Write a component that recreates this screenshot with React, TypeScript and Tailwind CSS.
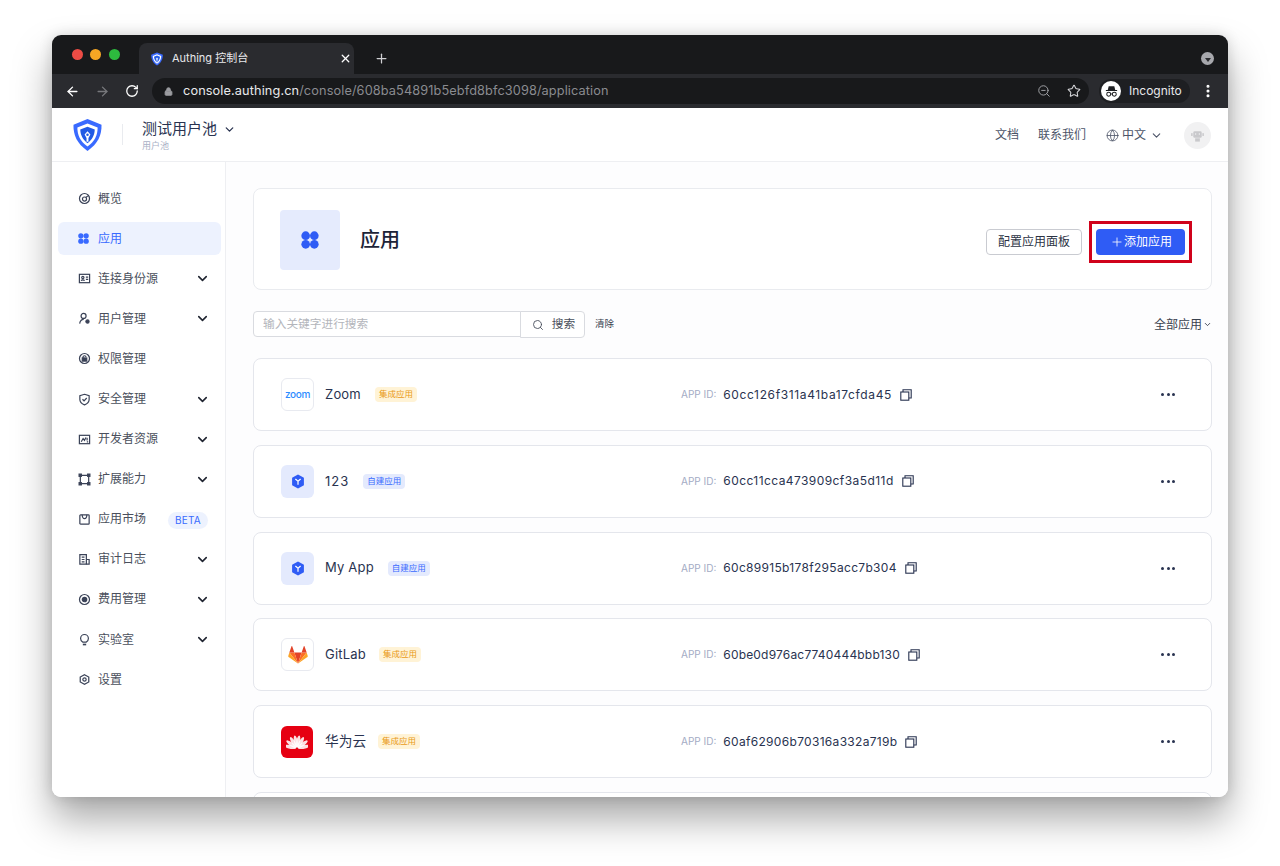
import { ArrowLeft, ArrowRight, ChevronDown, Globe, Lock, MoreVertical, Plus, RotateCw, Search, Star, X, ZoomOut } from "lucide-react";
import type { ReactNode } from "react";

const FONT = "font-['Inter','Noto_Sans_CJK_SC',sans-serif]";

function ShieldLogo(props: { className?: string }) {
  return (
    <svg viewBox="0 0 30 34" className={props.className}>
      <path d="M15 0.5 L29.5 6.5 C29.8 17 26 26 15 33.5 C4 26 0.2 17 0.5 6.5 Z" fill="#396aff" />
      <path d="M15 5 L25.5 9.2 C25.5 17 22.5 23.5 15 29 C7.5 23.5 4.5 17 4.5 9.2 Z" fill="#fff" />
      <path d="M15 8.5 L22.5 11.3 C22.3 17 20 21.5 15 25.5 C10 21.5 7.7 17 7.5 11.3 Z" fill="#215ae5" />
      <path d="M15 13 L18 16.5 L16 20 L16 24 L14 24 L14 20 L12 16.5 Z" fill="#fff" />
      <circle cx="15" cy="16.8" r="1.3" fill="#215ae5" />
    </svg>
  );
}

function Dots(props: { className?: string }) {
  return (
    <svg viewBox="0 0 20 20" className={props.className} fill="currentColor">
      <circle cx="5.2" cy="5.2" r="4.8" />
      <circle cx="14.8" cy="5.2" r="4.8" />
      <circle cx="5.2" cy="14.8" r="4.8" />
      <circle cx="14.8" cy="14.8" r="4.8" />
    </svg>
  );
}

// sidebar glyphs, all on a 14 box
const glyphs: Record<string, ReactNode> = {
  gauge: (
    <>
      <circle cx="7" cy="7" r="5.4" />
      <circle cx="7" cy="7.6" r="2.2" />
      <path d="M8.5 6 L10.5 4.2" />
    </>
  ),
  id: (
    <>
      <rect x="1.5" y="2.5" width="11" height="9" />
      <circle cx="5.2" cy="6" r="1.2" />
      <path d="M3.5 9.5 C4 8 6.4 8 7 9.5 M8.5 5.5 H11 M8.5 8 H11" />
    </>
  ),
  user: (
    <>
      <circle cx="6" cy="4.2" r="2.7" />
      <path d="M1.8 12.5 C2.2 9.5 4 8 6.2 8" />
      <circle cx="10.2" cy="10.2" r="1.7" fill="currentColor" />
    </>
  ),
  lock: (
    <>
      <circle cx="7" cy="7" r="5.4" />
      <rect x="4.6" y="6.4" width="4.8" height="3.4" fill="currentColor" />
      <path d="M5.4 6.4 V5.4 C5.4 3.6 8.6 3.6 8.6 5.4" />
    </>
  ),
  shield: (
    <>
      <path d="M7 1.4 L12 3 V7 C12 9.8 10 11.6 7 12.8 C4 11.6 2 9.8 2 7 V3 Z" />
      <path d="M4.8 6.8 L6.5 8.4 L9.4 5.4" />
    </>
  ),
  dev: (
    <>
      <rect x="1.5" y="2.5" width="11" height="9" />
      <path d="M3.5 9.5 L5.5 6 L7 8 L8.5 4.8 M9.5 9.5 H11 M9.8 5 V8" />
    </>
  ),
  ext: (
    <>
      <path d="M3.2 2.5 H10.8 M3.2 11.5 H10.8 M2.5 3.2 V10.8 M11.5 3.2 V10.8" />
      <rect x="1.2" y="1.2" width="2.4" height="2.4" fill="currentColor" />
      <rect x="10.4" y="1.2" width="2.4" height="2.4" fill="currentColor" />
      <rect x="1.2" y="10.4" width="2.4" height="2.4" fill="currentColor" />
      <rect x="10.4" y="10.4" width="2.4" height="2.4" fill="currentColor" />
    </>
  ),
  market: (
    <>
      <rect x="2" y="2" width="10" height="10" rx="0.8" />
      <path d="M4.5 2 C4.5 7.5 9.5 7.5 9.5 2" />
    </>
  ),
  log: (
    <>
      <path d="M9 12 H2 V1.8 H9 Z" />
      <path d="M4 4.5 H7 M4 7 H7 M4 9.5 H7 M9 7 H12 V12 H9" />
    </>
  ),
  fee: (
    <>
      <circle cx="7" cy="7" r="5.4" />
      <circle cx="7" cy="7" r="2.4" fill="currentColor" />
    </>
  ),
  bulb: (
    <>
      <path d="M5 9.8 C3.6 8.8 2.8 7.6 2.8 6 C2.8 3.5 4.8 1.6 7 1.6 C9.2 1.6 11.2 3.5 11.2 6 C11.2 7.6 10.4 8.8 9 9.8 Z" />
      <path d="M5.2 12.4 H8.8" strokeWidth="1.8" />
    </>
  ),
  gear: (
    <>
      <path d="M7 1.8 L11.6 4.4 V9.6 L7 12.2 L2.4 9.6 V4.4 Z" />
      <circle cx="7" cy="7" r="1.8" />
    </>
  ),
};

function Glyph(props: { name: string }) {
  return (
    <svg viewBox="0 0 14 14" fill="none" stroke="currentColor" strokeWidth="1.3" className="h-[13px] w-[13px] text-[#3a4257]">
      {glyphs[props.name]}
    </svg>
  );
}

const navItems = [
  { label: "概览", icon: "gauge" },
  { label: "应用", active: true },
  { label: "连接身份源", icon: "id", more: true },
  { label: "用户管理", icon: "user", more: true },
  { label: "权限管理", icon: "lock" },
  { label: "安全管理", icon: "shield", more: true },
  { label: "开发者资源", icon: "dev", more: true },
  { label: "扩展能力", icon: "ext", more: true },
  { label: "应用市场", icon: "market", beta: true },
  { label: "审计日志", icon: "log", more: true },
  { label: "费用管理", icon: "fee", more: true },
  { label: "实验室", icon: "bulb", more: true },
  { label: "设置", icon: "gear" },
];

function Sidebar() {
  return (
    <aside className="w-[174px] shrink-0 border-r border-[#eeeff2] bg-white pl-[6px] pr-[4px] pt-[16px]">
      {navItems.map((item) => (
        <div key={item.label} className="flex h-[40.1px] items-center">
          <div className={"flex h-[33px] w-full items-center rounded-md pl-[20px] pr-[11px] pt-[1px] " + (item.active ? "bg-[#edf2fe] text-[#396aff]" : "text-[#4a4f5c]")}>
            <span className="flex w-[20px] shrink-0">
              {item.active ? <Dots className="h-[11px] w-[11px] text-[#396aff]" /> : <Glyph name={item.icon as string} />}
            </span>
            <span className="text-[12px] leading-none">{item.label}</span>
            {item.more && <ChevronDown className="ml-auto h-[15px] w-[15px] text-[#1f2430]" strokeWidth={2.5} />}
            {item.beta && (
              <span className="ml-auto mr-[2px] mt-[2px] rounded-full bg-[#edf2fe] px-[7px] py-[2px] text-[10px] leading-[13px] tracking-wide text-[#396aff]">BETA</span>
            )}
          </div>
        </div>
      ))}
    </aside>
  );
}

function Cube() {
  return (
    <div className="flex h-[33px] w-[33px] items-center justify-center rounded-md bg-[#e4eafd]">
      <svg viewBox="0 0 14 16" className="h-[15px] w-[14px]">
        <path d="M7 0.5 L13.3 4 V12 L7 15.5 L0.7 12 V4 Z" fill="#2f5cf5" />
        <path d="M4.2 5.4 L7 7.8 L9.8 5.4 M7 7.8 V11.4" fill="none" stroke="#fff" strokeWidth="1.3" />
      </svg>
    </div>
  );
}

function FramedIcon(props: { children: ReactNode }) {
  return (
    <div className="flex h-[33px] w-[33px] items-center justify-center rounded-md border-[1.5px] border-[#e8eaf0] bg-white">{props.children}</div>
  );
}

function GitlabIcon() {
  return (
    <svg viewBox="0 0 24 22" className="h-[18px] w-[20px]">
      <path d="M12 21.5 L16.4 8 H7.6 Z" fill="#e24329" />
      <path d="M12 21.5 L7.6 8 H1.4 Z" fill="#fc6d26" />
      <path d="M1.4 8 L0.1 12.2 C0 12.6 0.1 13 0.5 13.3 L12 21.5 Z" fill="#fca326" />
      <path d="M1.4 8 H7.6 L4.9 0.4 C4.8 0 4.2 0 4.1 0.4 Z" fill="#e24329" />
      <path d="M12 21.5 L16.4 8 H22.6 Z" fill="#fc6d26" />
      <path d="M22.6 8 L23.9 12.2 C24 12.6 23.9 13 23.5 13.3 L12 21.5 Z" fill="#fca326" />
      <path d="M22.6 8 H16.4 L19.1 0.4 C19.2 0 19.8 0 19.9 0.4 Z" fill="#e24329" />
    </svg>
  );
}

function HuaweiIcon() {
  const angles = [-78, -54, -31, -10, 10, 31, 54, 78];
  return (
    <div className="flex h-[32px] w-[32px] items-center justify-center rounded-md bg-[#e60012]">
      <svg viewBox="0 0 24 16" className="h-[15px] w-[22px]">
        {angles.map((a) => (
          <ellipse key={a} cx="12" cy="7.8" rx="2" ry="6.6" fill="#fff" opacity="0.88" transform={`rotate(${a} 12 15.5)`} />
        ))}
      </svg>
    </div>
  );
}

const apps: { name: string; tag: "int" | "own"; id: string; icon: ReactNode; tagGap: string; nameClass: string; idClass: string }[] = [
  {
    name: "Zoom",
    tag: "int",
    id: "60cc126f311a41ba17cfda45",
    icon: (
      <FramedIcon>
        <span className="font-['Inter',sans-serif] text-[10px] font-medium tracking-[-0.3px] text-[#2d8cff]">zoom</span>
      </FramedIcon>
    ),
    tagGap: "ml-[14px]",
    nameClass: "text-[13px] tracking-[0.2px]",
    idClass: "tracking-[0.63px]",
  },
  { name: "123", tag: "own", id: "60cc11cca473909cf3a5d11d", icon: <Cube />, tagGap: "ml-[14px]", nameClass: "text-[13px] tracking-[1px]", idClass: "tracking-[0.43px]" },
  { name: "My App", tag: "own", id: "60c89915b178f295acc7b304", icon: <Cube />, tagGap: "ml-[14px]", nameClass: "text-[13px] tracking-[0.2px]", idClass: "tracking-[0.31px]" },
  { name: "GitLab", tag: "int", id: "60be0d976ac7740444bbb130", icon: <FramedIcon><GitlabIcon /></FramedIcon>, tagGap: "ml-[13px]", nameClass: "text-[13px] tracking-[0.2px]", idClass: "tracking-[0.18px]" },
  { name: "华为云", tag: "int", id: "60af62906b70316a332a719b", icon: <HuaweiIcon />, tagGap: "ml-[12px]", nameClass: "text-[13.7px]", idClass: "tracking-[0.31px]" },
];

function AppRow(props: (typeof apps)[number]) {
  return (
    <div className="flex h-[73px] shrink-0 items-center rounded-lg border border-[#e4e6ec] bg-white pl-[27px] pr-[36px]">
      <div className="flex w-[401px] shrink-0 items-center">
        <div className="flex w-[44px] shrink-0">{props.icon}</div>
        <span className={"text-[#293350] " + props.nameClass}>{props.name}</span>
        <span
          className={
            "rounded px-[4px] text-[8.5px] leading-[15px] " +
            props.tagGap +
            " " +
            (props.tag === "int" ? "bg-[#fff3d6] text-[#e99a18]" : "bg-[#e4eafd] text-[#396aff]")
          }
        >
          {props.tag === "int" ? "集成应用" : "自建应用"}
        </span>
      </div>
      <span className="-ml-[1px] text-[10px] text-[#a3abc4]">APP ID:</span>
      <span className={"ml-[7px] text-[12px] text-[#293350] " + props.idClass}>{props.id}</span>
      <svg viewBox="0 0 12 12" fill="none" stroke="#293350" strokeWidth="1.1" className="ml-[8px] h-[12px] w-[12px]">
        <rect x="0.8" y="3" width="8" height="8.2" />
        <path d="M3 3 V0.8 H11.2 V9 H8.8" />
      </svg>
      <div className="ml-auto flex gap-[2.5px]">
        <span className="h-[3px] w-[3px] rounded-full bg-[#293350]" />
        <span className="h-[3px] w-[3px] rounded-full bg-[#293350]" />
        <span className="h-[3px] w-[3px] rounded-full bg-[#293350]" />
      </div>
    </div>
  );
}

function BrowserChrome() {
  return (
    <>
      <div className="flex h-[39px] bg-[#18191b] pl-[19.5px]">
        <div className="flex h-[39px] w-[67.5px] shrink-0 gap-[7.5px] pt-[14px]">
          <span className="h-[11px] w-[11px] rounded-full bg-[#ed4c45]" />
          <span className="h-[11px] w-[11px] rounded-full bg-[#f7a724]" />
          <span className="h-[11px] w-[11px] rounded-full bg-[#2dba3e]" />
        </div>
        <div className="mt-[8px] flex h-[31px] w-[215px] items-center rounded-t-lg bg-[#2a2b2f] pl-[12px] pr-[2px]">
          <ShieldLogo className="h-[14px] w-[12px]" />
          <span className="ml-[9px] text-[11px] text-[#e8e9ec]">Authing 控制台</span>
          <X className="ml-auto h-[13px] w-[13px] text-white" strokeWidth={2.4} />
        </div>
        <Plus className="ml-[20px] mt-[16px] h-[15px] w-[15px] text-[#cfd0d3]" strokeWidth={2} />
        <span className="ml-auto mr-[14px] mt-[17px] flex h-[13px] w-[13px] items-center justify-center rounded-full bg-[#a7a8ad]">
          <span className="mt-[2px] border-x-[3.5px] border-t-[4.5px] border-x-transparent border-t-[#2a2b2f]" />
        </span>
      </div>
      <div className="flex h-[34px] items-center bg-[#2a2b2f] pl-[13px]">
        <ArrowLeft className="h-[15px] w-[15px] text-white" strokeWidth={2.2} />
        <ArrowRight className="ml-[15px] h-[15px] w-[15px] text-[#77787c]" strokeWidth={2.2} />
        <RotateCw className="ml-[15px] h-[14px] w-[14px] text-white" strokeWidth={2.2} />
        <div className="ml-[13px] flex h-[26px] w-[937px] shrink-0 items-center rounded-full bg-[#18191b] pl-[12px] pr-[6px]">
          <Lock className="h-[9px] w-[9px] fill-[#9b9ca0] text-[#9b9ca0]" strokeWidth={2.5} />
          <span className="ml-[10px] text-[12.75px] tracking-[0.1px] text-[#e8e9ec]">console.authing.cn</span>
          <span className="text-[12.75px] tracking-[0.1px] text-[#8a8b90]">/console/608ba54891b5ebfd8bfc3098/application</span>
          <ZoomOut className="ml-auto h-[14px] w-[14px] text-[#a8a9ad]" strokeWidth={1.6} />
          <Star className="ml-[16px] mr-[2px] h-[14px] w-[14px] text-[#d5d6d9]" strokeWidth={1.8} />
        </div>
        <div className="ml-[10px] flex h-[24px] w-[91px] shrink-0 items-center rounded-full bg-[#1e1f22] pl-[2px]">
          <span className="flex h-[20px] w-[20px] items-center justify-center rounded-full bg-white">
            <svg viewBox="0 0 16 16" className="h-[15px] w-[15px]" fill="#1e1f22">
              <path d="M5 2.5 H11 L12 6.5 H14 V7.5 H2 V6.5 H4 Z" />
              <circle cx="5" cy="11" r="2.1" fill="none" stroke="#1e1f22" strokeWidth="1.1" />
              <circle cx="11" cy="11" r="2.1" fill="none" stroke="#1e1f22" strokeWidth="1.1" />
              <path d="M7 10.6 H9" stroke="#1e1f22" strokeWidth="1" />
            </svg>
          </span>
          <span className="ml-[8px] text-[12px] text-[#e8e9ec]">Incognito</span>
        </div>
        <MoreVertical className="ml-[10px] h-[16px] w-[16px] text-white" strokeWidth={2.6} />
      </div>
    </>
  );
}

function TopBar() {
  return (
    <header className="flex h-[54px] shrink-0 items-center border-b border-[#eeeff2] bg-white pl-[21px] pr-[17px]">
      <ShieldLogo className="h-[34px] w-[29px]" />
      <span className="ml-[20px] h-[21px] w-px bg-[#e9ebef]" />
      <div className="ml-[19px] mt-[2px] flex flex-col">
        <div className="flex items-center gap-[6px]">
          <span className="text-[15px] leading-[20px] text-[#293350]">测试用户池</span>
          <ChevronDown className="h-[13px] w-[13px] text-[#293350]" strokeWidth={2.4} />
        </div>
        <span className="mt-[1px] text-[9px] leading-[12px] text-[#a9b0c6]">用户池</span>
      </div>
      <div className="ml-auto mt-[1px] flex items-center text-[12px] text-[#4c5468]">
        <span>文档</span>
        <span className="ml-[19px]">联系我们</span>
        <Globe className="ml-[20px] h-[13px] w-[13px]" strokeWidth={1.5} />
        <span className="ml-[3px]">中文</span>
        <ChevronDown className="ml-[4px] h-[13px] w-[13px]" strokeWidth={2} />
        <span className="ml-[21px] flex h-[27px] w-[27px] items-center justify-center rounded-full bg-[#f1f1f2]">
          <svg viewBox="0 0 16 16" className="h-[15px] w-[15px]" fill="#c9c9cc">
            <rect x="3.5" y="3.5" width="9" height="7" rx="1.5" />
            <rect x="1.2" y="5.5" width="1.6" height="3" />
            <rect x="13.2" y="5.5" width="1.6" height="3" />
            <rect x="5.5" y="11" width="5" height="3.5" />
            <circle cx="6" cy="6.5" r="0.8" fill="#f1f1f2" />
            <circle cx="10" cy="6.5" r="0.8" fill="#f1f1f2" />
          </svg>
        </span>
      </div>
    </header>
  );
}

export default function App() {
  return (
    <div className={"h-[866px] w-[1280px] overflow-hidden bg-white pl-[52px] pt-[35px] " + FONT}>
      <div className="flex h-[762px] w-[1176px] flex-col overflow-hidden rounded-[9px] shadow-[0_22px_38px_rgba(0,0,0,0.34),0_0_14px_rgba(0,0,0,0.14)]">
        <BrowserChrome />
        <TopBar />
        <div className="flex min-h-0 flex-1">
          <Sidebar />
          <main className="flex min-w-0 flex-1 flex-col overflow-hidden bg-[#fdfdfe] pl-[27px] pr-[16px] pt-[26px]">
            <section className="flex h-[102px] shrink-0 items-center rounded-lg border border-[#e9ebef] bg-white pl-[26px] pr-[19px] pt-[2px]">
              <div className="flex h-[60px] w-[60px] items-center justify-center rounded bg-[#e5ebfd]">
                <Dots className="h-[18px] w-[18px] text-[#2f5cf5]" />
              </div>
              <h1 className="ml-[20px] text-[20px] font-medium text-[#1d2438]">应用</h1>
              <div className="ml-auto flex items-center">
                <button className="mt-[3px] h-[26px] w-[96px] rounded border border-[#c9cbd1] bg-white text-[12px] text-[#2c3344]">配置应用面板</button>
                <div className="ml-[7px] mt-[3px] border-[3px] border-[#d0021b] px-[4px] py-[5px]">
                  <button className="flex h-[26px] w-[89px] items-center justify-center rounded bg-[#2f5cf5] pl-[1px] text-[12px] text-white">
                    <Plus className="h-[14px] w-[14px]" strokeWidth={1.4} />
                    添加应用
                  </button>
                </div>
              </div>
            </section>
            <div className="mt-[21px] flex h-[26px] shrink-0 items-center">
              <div className="flex h-[26px] w-[268px] items-center rounded-l border border-[#d9dbe0] bg-white pl-[9px] pt-[1px] text-[11.7px] text-[#b3b5bb]">
                输入关键字进行搜索
              </div>
              <button className="-ml-px flex h-[27px] w-[65px] items-center justify-center gap-[8px] rounded-r border border-[#d9dbe0] bg-white pl-[2px] pt-[1px] text-[11.7px] text-[#4a4f5c]">
                <Search className="h-[12px] w-[12px]" strokeWidth={1.8} />
                搜索
              </button>
              <span className="ml-[10px] text-[9.5px] text-[#39414f]">清除</span>
              <div className="ml-auto flex items-center pt-[1px] text-[12px] text-[#39414f]">
                全部应用
                <ChevronDown className="ml-[1px] h-[9px] w-[9px]" strokeWidth={2.4} />
              </div>
            </div>
            <div className="mt-[21px] flex flex-col gap-[13.8px]">
              {apps.map((app) => (
                <AppRow key={app.id} {...app} />
              ))}
              <div className="h-[73px] shrink-0 rounded-lg border border-[#e4e6ec] bg-white" />
            </div>
          </main>
        </div>
      </div>
    </div>
  );
}
